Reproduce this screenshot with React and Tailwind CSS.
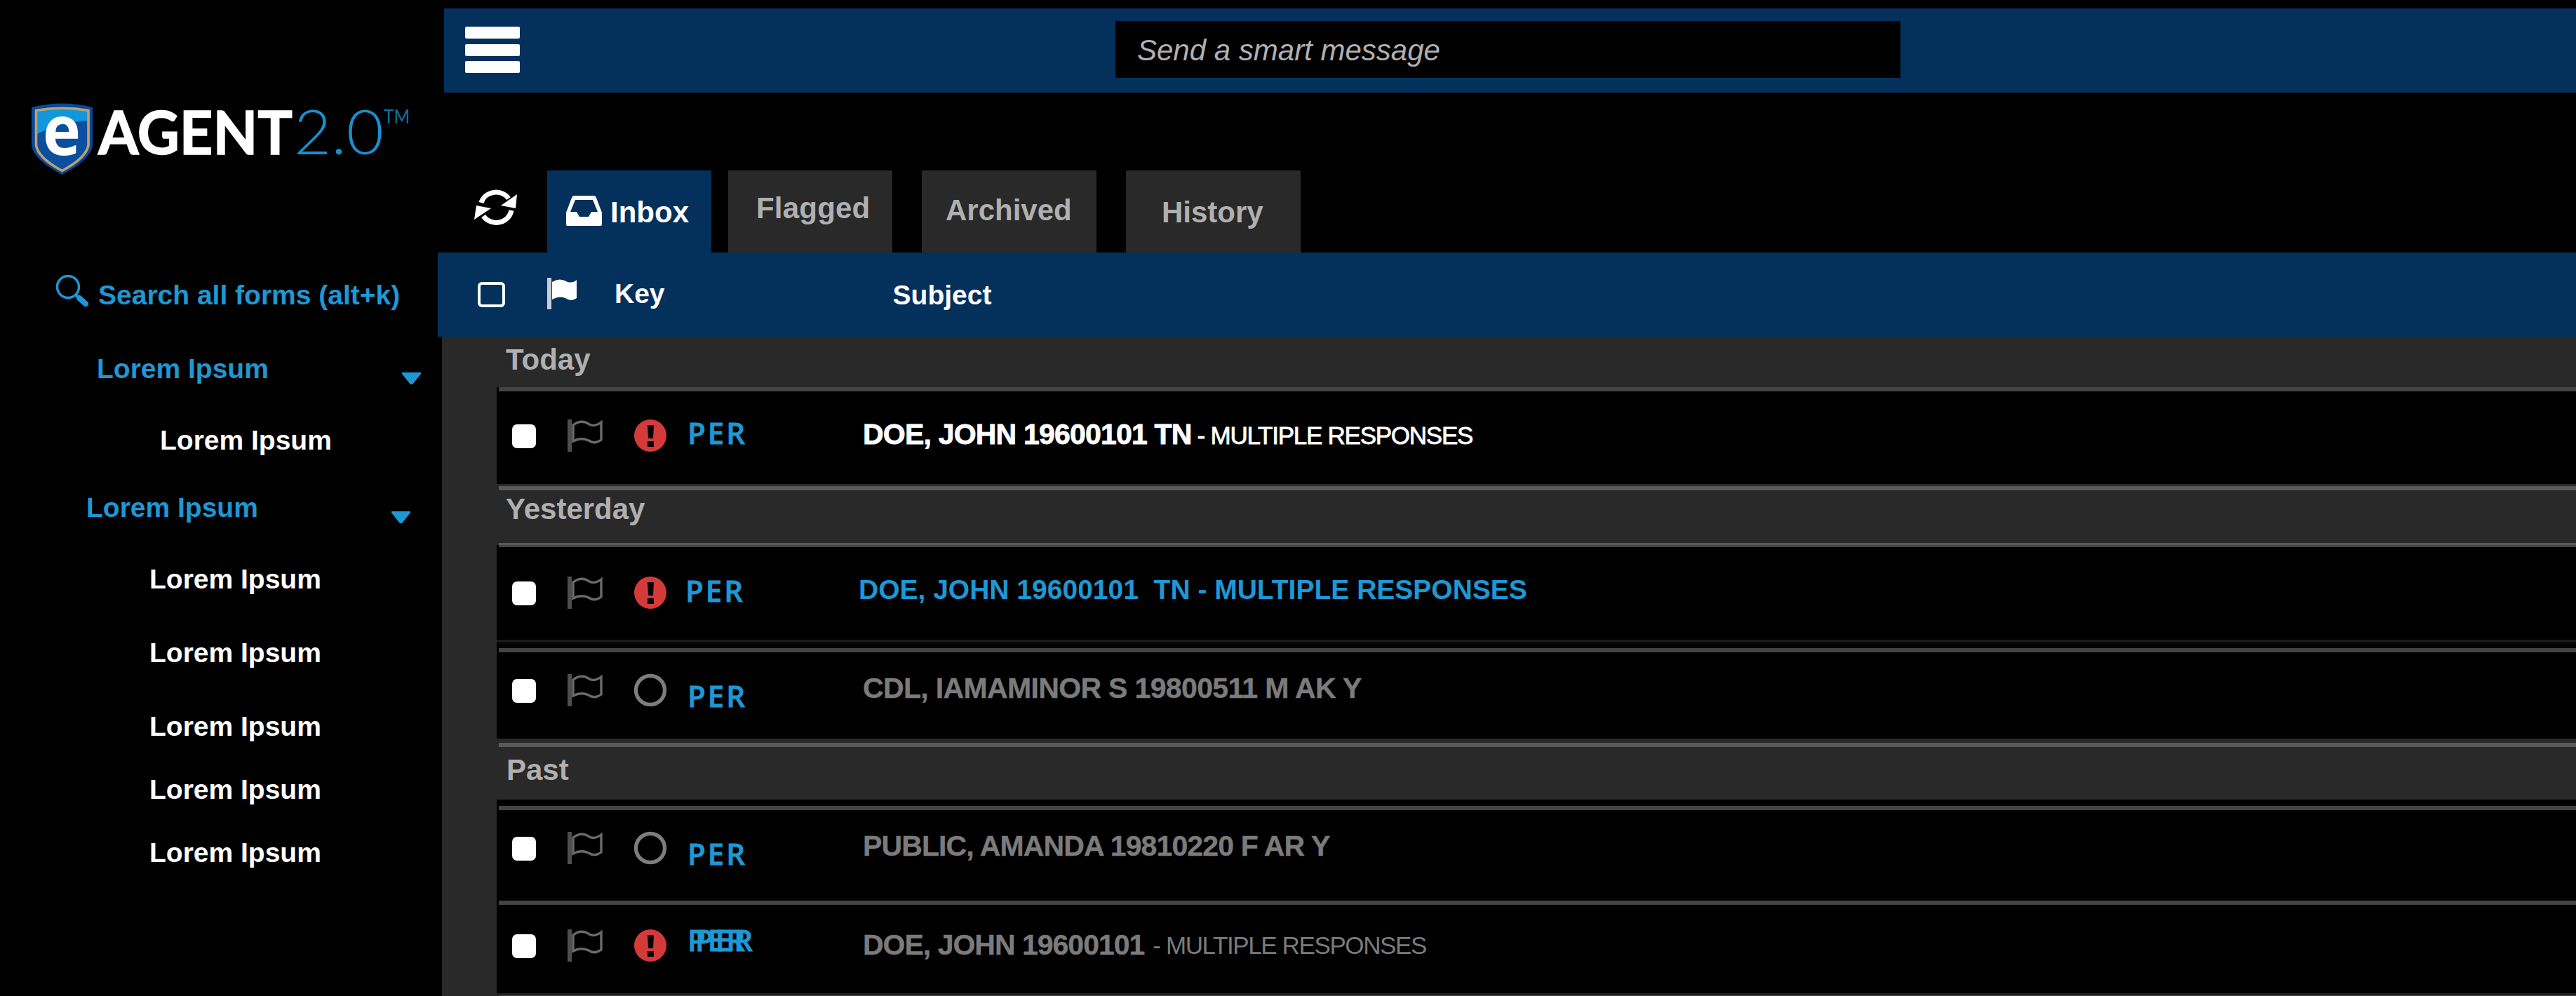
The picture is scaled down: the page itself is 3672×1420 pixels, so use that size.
import React from "react";

function Label({ className, children }) {
  return <span className={`block whitespace-pre leading-[48px] ${className}`}>{children}</span>;
}

function Shield() {
  return (
    <svg className="block h-[102px] w-[90px] shrink-0 overflow-visible" viewBox="0 0 90 102">
      <path d="M1 6Q45 -5 88 6V60Q86 80 44.500 102Q3 80 1 60Z" fill="#07489a" />
      <path d="M9 12Q45 3 81 12V60Q77 77 44.500 95Q12 77 9 60Z" fill="#0a4fa0" />
      <path d="M9 12Q45 3 81 12V25Q42 27 9 44Z" fill="#1296dc" />
      <path d="M7.500 10.500Q45 4 82 10.500V60Q79 78 44.500 96.500Q10 78 7.500 60Z" fill="none" stroke="#c3a06c" strokeWidth="3.600" />
      <text x="17" y="74" fill="#fff" fontFamily="Open Sans" fontWeight="700" fontSize="98" textLength="54" lengthAdjust="spacingAndGlyphs">e</text>
    </svg>
  );
}

function Logo() {
  return (
    <div className="ml-[44px] mt-[147px] flex h-[129px] items-start">
      <Shield />
      <svg className="ml-[3px] block h-[126px] w-[460px] overflow-visible" viewBox="0 0 460 126">
        <text x="3" y="73" fill="#fff" stroke="#fff" strokeWidth="1.500" fontFamily="Lato" fontWeight="700" fontSize="87" textLength="277" lengthAdjust="spacingAndGlyphs">AGENT</text>
        <text x="282" y="73" fill="#1a8fce" fontFamily="Lato" fontWeight="300" fontSize="88" textLength="128" lengthAdjust="spacingAndGlyphs">2.0</text>
        <text x="410" y="29" fill="#14739f" fontFamily="Lato" fontWeight="400" fontSize="27" textLength="37" lengthAdjust="spacingAndGlyphs">TM</text>
      </svg>
    </div>
  );
}

function Caret() {
  return (
    <svg className="block h-[17px] w-[27px]" viewBox="0 0 27 17">
      <path d="M0 0H27V2L15 17H12L0 2Z" fill="#1e98d5" />
    </svg>
  );
}

function NavGroup({ title, className }) {
  return (
    <div className={`flex justify-between ${className}`}>
      <Label className="text-[39px] font-bold text-[#1e98d5]">{title}</Label>
      <div className="mt-[29px]"><Caret /></div>
    </div>
  );
}

function NavItem({ className }) {
  return <Label className={`text-[39px] font-bold text-white ${className}`}>Lorem Ipsum</Label>;
}

function Sidebar() {
  return (
    <aside className="flex h-[1420px] w-[624px] shrink-0 flex-col">
      <Logo />
      <div className="ml-[80px] mt-[116px] flex h-[56px]">
        <svg className="block h-[47px] w-[47px]" viewBox="0 0 47 47">
          <circle cx="17" cy="17" r="15.5" fill="none" stroke="#1e98d5" strokeWidth="3.4" />
          <path d="M27 28L32 32" stroke="#1e98d5" strokeWidth="4" />
          <path d="M33 33L42 41" stroke="#1e98d5" strokeWidth="8" strokeLinecap="round" />
        </svg>
        <Label className="ml-[13px] mt-[5px] text-[39px] font-bold text-[#1e98d5]">Search all forms (alt+k)</Label>
      </div>
      <NavGroup title="Lorem Ipsum" className="ml-[138px] mr-[24px] mt-[54px] h-[48px]" />
      <NavItem className="ml-[228px] mt-[54px]" />
      <NavGroup title="Lorem Ipsum" className="ml-[123px] mr-[39px] mt-[48px] h-[48px]" />
      <NavItem className="ml-[213px] mt-[54px]" />
      <NavItem className="ml-[213px] mt-[57px]" />
      <NavItem className="ml-[213px] mt-[57px]" />
      <NavItem className="ml-[213px] mt-[42px]" />
      <NavItem className="ml-[213px] mt-[42px]" />
    </aside>
  );
}

function TopBar() {
  return (
    <header className="ml-[9px] mt-[12px] flex h-[120px] shrink-0 bg-[#04305c]">
      <div className="ml-[30px] mt-[26px] flex h-[66px] w-[78px] flex-col justify-between">
        <div className="h-[17px] rounded-[2px] bg-white" />
        <div className="h-[17px] rounded-[2px] bg-white" />
        <div className="h-[17px] rounded-[2px] bg-white" />
      </div>
      <div className="ml-[849px] mt-[18px] h-[81px] w-[1119px] bg-black pl-[31px] pt-[18px]">
        <Label className="text-[42px] italic text-[#b0b0b0]">Send a smart message</Label>
      </div>
    </header>
  );
}

function Tabs() {
  return (
    <div className="mt-[111px] flex h-[117px] shrink-0">
      <svg className="ml-[51px] mt-[26px] block h-[52px] w-[63px]" viewBox="0 0 63 52">
        <path d="M11 20A22 21 0 0 1 50 14" fill="none" stroke="#fff" strokeWidth="7" />
        <path d="M62 8L60 28L39 24Z" fill="#fff" />
        <path d="M54 31A22 21 0 0 1 14 39" fill="none" stroke="#fff" strokeWidth="7" />
        <path d="M1 44L4 24L25 28Z" fill="#fff" />
      </svg>
      <div className="ml-[42px] flex w-[234px] bg-[#04305c]">
        <svg className="ml-[27px] mt-[36px] block h-[44px] w-[51px]" viewBox="0 0 51 44">
          <path fillRule="evenodd" d="M12 0H39Q42 0 43 3L51 24V41Q51 43 48 43H3Q0 43 0 41V24L8 3Q9 0 12 0ZM13 6L6 23H15L19 30H32L36 23H45L38 6Z" fill="#fff" />
        </svg>
        <Label className="ml-[12px] mt-[36px] text-[42px] font-bold text-white">Inbox</Label>
      </div>
      <div className="ml-[24px] w-[234px] bg-[#292929] pl-[40px] pt-[30px]">
        <Label className="text-[42px] font-bold tracking-[0.2px] text-[#b0b0b0]">Flagged</Label>
      </div>
      <div className="ml-[42px] w-[249px] bg-[#292929] pl-[34px] pt-[33px]">
        <Label className="text-[42px] font-bold text-[#b0b0b0]">Archived</Label>
      </div>
      <div className="ml-[42px] w-[249px] bg-[#292929] pl-[51px] pt-[36px]">
        <Label className="text-[42px] font-bold text-[#b0b0b0]">History</Label>
      </div>
    </div>
  );
}

function ColumnHeads() {
  return (
    <div className="flex h-[120px] shrink-0 bg-[#04305c]">
      <div className="ml-[57px] mt-[42px] h-[36px] w-[39px] rounded-[6px] border-[4px] border-white" />
      <svg className="ml-[60px] mt-[36px] block h-[45px] w-[43px]" viewBox="0 0 43 45">
        <path d="M0 0H6V45H0Z" fill="#c4cfda" />
        <path d="M7 6Q18 -1 29 6Q37 8 42 3V29Q34 35 26 29Q18 25 7 31Z" fill="#fff" />
      </svg>
      <Label className="ml-[53px] mt-[35px] text-[39px] font-bold text-white">Key</Label>
      <Label className="ml-[325px] mt-[37px] text-[39px] font-bold text-white">Subject</Label>
    </div>
  );
}

function Flag() {
  return (
    <svg className="ml-[44px] block h-[48px] w-[51px]" viewBox="0 0 51 48">
      <path d="M4 1V47" stroke="#4e4e4e" strokeWidth="6" />
      <path d="M9 9Q21 0 32 8Q40 12 49 5V30Q40 37 31 31Q20 26 9 32Z" fill="none" stroke="#6a6a6a" strokeWidth="3.4" />
    </svg>
  );
}

function Status({ alert }) {
  return (
    <svg className="ml-[44px] block h-[48px] w-[48px]" viewBox="0 0 48 48">
      {alert ? (
        <>
          <circle cx="24" cy="24" r="23" fill="#d53a3a" />
          <path d="M20 9H29L28 28H21ZM20 32H29V40H20Z" fill="#000" />
        </>
      ) : (
        <circle cx="24" cy="24" r="20.500" fill="none" stroke="#7d7d7d" strokeWidth="5.400" />
      )}
    </svg>
  );
}

function Icons({ alert, className }) {
  return (
    <div className={`flex h-[48px] shrink-0 ${className}`}>
      <div className="ml-[22px] mt-[8px] h-[34px] w-[34px] rounded-[7px] bg-white" />
      <Flag />
      <Status alert={alert} />
    </div>
  );
}

function Per({ className }) {
  return (
    <span className={`block w-[90px] shrink-0 whitespace-pre font-['Open_Sans',sans-serif] text-[42px] font-semibold leading-[48px] tracking-[3px] text-[#1e98d5] [-webkit-text-stroke:0.8px_#1e98d5] ${className}`}>PER</span>
  );
}

function Group({ title, className, pad }) {
  return (
    <div className={`shrink-0 ${className}`}>
      <Label className={`text-[42px] font-bold text-[#b0b0b0] ${pad}`}>{title}</Label>
    </div>
  );
}

function Rule({ className }) {
  return <div className={`ml-[3px] h-[6px] shrink-0 ${className}`} />;
}

function Inbox() {
  return (
    <div className="ml-[6px] flex h-[940px] shrink-0 flex-col overflow-hidden bg-[#292929] pl-[78px]">
      <Group title="Today" className="h-[72px]" pad="ml-[13px] pt-[9px]" />
      <div className="h-[138px] shrink-0 bg-black">
        <Rule className="bg-[#444444]" />
        <div className="flex">
          <Icons alert className="mt-[39px]" />
          <Per className="ml-[29px] mt-[35px]" />
          <Label className="ml-[160px] mt-[37px] text-[41px] font-bold tracking-[-0.8px] text-white [-webkit-text-stroke:0.8px_#fff]">DOE, JOHN 19600101 TN</Label>
          <Label className="ml-[8px] mt-[39px] text-[35px] tracking-[-1.25px] text-white [-webkit-text-stroke:0.8px_#fff]">- MULTIPLE RESPONSES</Label>
        </div>
      </div>
      <Rule className="mt-[3px] bg-[#595959]" />
      <Group title="Yesterday" className="h-[75px]" pad="ml-[13px] pt-[3px]" />
      <div className="shrink-0 bg-black">
        <div className="h-[3px] bg-[#292929] pl-[3px]"><div className="h-full bg-[#595959]" /></div>
        <div className="ml-[3px] h-[3px] bg-[#444444]" />
        <div className="flex h-[132px]">
          <Icons alert className="mt-[41px]" />
          <Per className="ml-[26px] mt-[38px]" />
          <Label className="ml-[157px] mt-[37px] text-[39px] font-bold text-[#1e98d5]">DOE, JOHN 19600101  TN - MULTIPLE RESPONSES</Label>
        </div>
        <div className="h-[3px] bg-[#1c1c1c]" />
        <div className="h-[3px] bg-[#0b0b0b]" />
        <Rule className="mt-[6px] bg-[#444444]" />
        <div className="flex h-[123px]">
          <Icons className="mt-[30px]" />
          <Per className="ml-[29px] mt-[38px]" />
          <Label className="ml-[160px] mt-[27px] text-[41px] font-bold tracking-[-0.65px] text-[#7b7b7b] [-webkit-text-stroke:0.4px_#7b7b7b]">CDL, IAMAMINOR S 19800511 M AK Y</Label>
        </div>
      </div>
      <Rule className="mt-[6px] bg-[#595959]" />
      <Group title="Past" className="h-[75px]" pad="ml-[14px] pt-[9px]" />
      <div className="h-[276px] shrink-0 bg-black">
        <div className="h-[9px]" />
        <Rule className="bg-[#444444]" />
        <div className="flex h-[129px]">
          <Icons className="mt-[30px]" />
          <Per className="ml-[29px] mt-[38px]" />
          <Label className="ml-[160px] mt-[27px] text-[41px] font-bold tracking-[-0.88px] text-[#7b7b7b] [-webkit-text-stroke:0.4px_#7b7b7b]">PUBLIC, AMANDA 19810220 F AR Y</Label>
        </div>
        <Rule className="bg-[#444444]" />
        <div className="flex">
          <Icons alert className="mt-[34px]" />
          <div className="relative ml-[29px] mt-[26px] w-[90px]">
            <Per className="" />
            <Per className="absolute left-[11px] top-0" />
          </div>
          <Label className="ml-[160px] mt-[33px] text-[41px] font-bold tracking-[-1px] text-[#7b7b7b] [-webkit-text-stroke:0.4px_#7b7b7b]">DOE, JOHN 19600101</Label>
          <Label className="ml-[12px] mt-[34px] text-[35px] tracking-[-1.4px] text-[#7b7b7b]">- MULTIPLE RESPONSES</Label>
        </div>
      </div>
      <div className="h-[3px] shrink-0 bg-[#1f1f1f]" />
      <Rule className="bg-[#444444]" />
    </div>
  );
}

export default function App() {
  return (
    <div className="flex h-[1420px] w-[3672px] overflow-hidden bg-black font-['Liberation_Sans',Arial,sans-serif]">
      <Sidebar />
      <main className="flex h-[1420px] w-[3048px] flex-col">
        <TopBar />
        <Tabs />
        <ColumnHeads />
        <Inbox />
      </main>
    </div>
  );
}
